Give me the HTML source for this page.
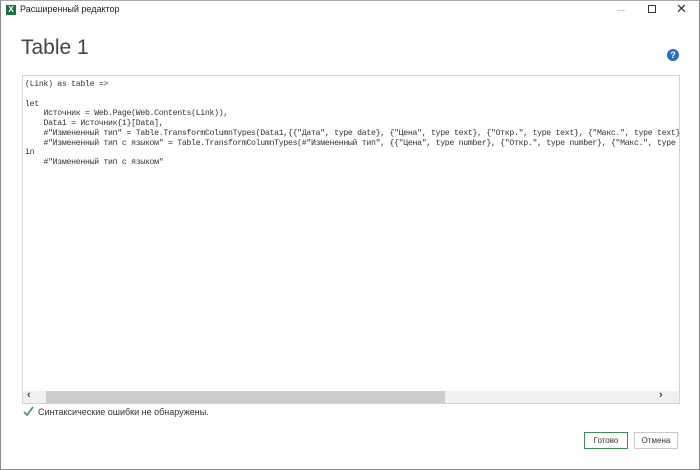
<!DOCTYPE html>
<html><head><meta charset="utf-8"><style>
*{margin:0;padding:0;box-sizing:border-box}
body{width:700px;height:470px;background:#fff;position:relative;overflow:hidden;font-family:"Liberation Sans",sans-serif}
.win{position:absolute;left:0;top:0;width:700px;height:470px;border:1px solid #8a8a8a;border-top:1px solid #aaa}
.abs{position:absolute}
.code{position:absolute;left:25px;top:80px;width:654px;overflow:hidden;font-family:"Liberation Mono",monospace;font-size:8.2px;letter-spacing:-0.3px;line-height:9.75px;color:#333;white-space:pre}
.btn{position:absolute;top:432px;height:17px;width:44px;border:1px solid #c8c8c8;font-size:8px;color:#333;text-align:center;line-height:15px;background:#fff}
</style></head><body>
<div class="win"></div>
<div class="abs" style="left:6px;top:5px;width:10px;height:10px;background:#1e7145;color:#fff;font-size:8px;font-weight:bold;line-height:10px;text-align:center">X</div>
<div class="abs" style="left:20px;top:4px;font-size:9px;color:#222">Расширенный редактор</div>
<div class="abs" style="left:617px;top:10px;width:8px;height:1px;background:#ccc"></div>
<div class="abs" style="left:648px;top:5px;width:8px;height:8px;border:1px solid #333"></div>
<div class="abs" style="left:676px;top:1px;font-size:13px;color:#333">✕</div>
<div class="abs" style="left:21px;top:36px;font-size:21px;color:#444">Table 1</div>
<div class="abs" style="left:667px;top:49px;width:12px;height:12px;border-radius:50%;background:#2a6ebb;color:#fff;font-size:9px;font-weight:bold;text-align:center;line-height:12px">?</div>
<div class="abs" style="left:22px;top:75px;width:658px;height:329px;border:1px solid #d4d4d4"></div>
<div class="code">(Link) as table =&gt;

let
    Источник = Web.Page(Web.Contents(Link)),
    Data1 = Источник{1}[Data],
    #"Измененный тип" = Table.TransformColumnTypes(Data1,{{"Дата", type date}, {"Цена", type text}, {"Откр.", type text}, {"Макс.", type text},
    #"Измененный тип с языком" = Table.TransformColumnTypes(#"Измененный тип", {{"Цена", type number}, {"Откр.", type number}, {"Макс.", type n
in
    #"Измененный тип с языком"</div>
<div class="abs" style="left:23px;top:391px;width:656px;height:12px;background:#f0f0f0"></div>
<div class="abs" style="left:46px;top:391px;width:399px;height:12px;background:#cdcdcd"></div>
<div class="abs" style="left:27px;top:389px;font-size:11px;font-weight:bold;color:#444">‹</div>
<div class="abs" style="left:659px;top:389px;font-size:11px;font-weight:bold;color:#444">›</div>
<svg class="abs" style="left:23px;top:406px" width="11" height="11"><path d="M1 6 L4 9 L10 1" stroke="#3a9a5c" stroke-width="1.6" fill="none"/></svg>
<div class="abs" style="left:38px;top:407px;font-size:9px;color:#333">Синтаксические ошибки не обнаружены.</div>
<div class="btn" style="left:584px;border-color:#3f8f5e">Готово</div>
<div class="btn" style="left:634px">Отмена</div>
</body></html>
